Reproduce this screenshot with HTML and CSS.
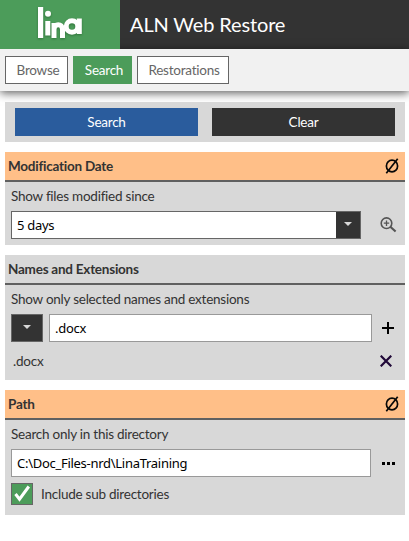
FILE: index.html
```html
<!DOCTYPE html>
<html lang="en">
<head>
<meta charset="utf-8">
<title>ALN Web Restore</title>
<link rel="stylesheet" href="styles.css">
</head>
<body>
<header class="header">
  <div class="brand">
    <svg class="logo" width="48" height="36" viewBox="0 0 48 36" fill="none" stroke="#fff">
      <g class="logo-shade">
        <path d="M4.600 2v31" stroke-width="5.2"/>
        <path d="M11.800 16v14.500" stroke-width="5"/>
        <circle cx="12" cy="8.700" r="3" fill="#fff" stroke="none"/>
        <path d="M18 33V18M18 24.500c0-6.500 8.500-6.500 8.500 0v8.500" stroke-width="5"/>
        <circle cx="36" cy="21.500" r="5.800" stroke-width="5"/>
        <path d="M43.300 13.500v15.500" stroke-width="5"/>
      </g>
    </svg>
  </div>
  <h1 class="title">ALN Web Restore</h1>
</header>
<nav class="tabs">
  <button class="tab tab-browse">Browse</button>
  <button class="tab tab-search active">Search</button>
  <button class="tab tab-restorations">Restorations</button>
</nav>
<main class="content">
  <div class="actions">
    <button class="action primary">Search</button>
    <button class="action">Clear</button>
  </div>

  <section class="panel panel-date">
    <div class="panel-head filtered">
      <h2>Modification Date</h2>
      <svg class="empty" width="14" height="16" viewBox="0 0 14 16" fill="none" stroke="#080808" stroke-width="1.7"><ellipse cx="7" cy="8" rx="5.600" ry="5.800"/><path d="M1.300 15.300L12.700.7"/></svg>
    </div>
    <p class="label">Show files modified since</p>
    <div class="row">
      <div class="select"><span class="value">5 days</span><span class="arrow"><i class="caret"></i></span></div>
      <svg class="magnify" width="17" height="16" viewBox="0 0 17 16" fill="none" stroke="#555"><circle cx="6.500" cy="6.200" r="5.300" stroke-width="1.600"/><path d="M3.800 6.200h5.400M6.500 3.500v5.400" stroke-width="1.300"/><path d="M10.300 9.800l5.300 4.700" stroke-width="2.200"/></svg>
    </div>
  </section>

  <section class="panel panel-names">
    <div class="panel-head">
      <h2>Names and Extensions</h2>
    </div>
    <p class="label">Show only selected names and extensions</p>
    <div class="row">
      <span class="arrow boxed"><i class="caret"></i></span>
      <div class="field field-name"><span class="value">.docx</span></div>
      <svg class="plus" width="12" height="12" viewBox="0 0 12 12" stroke="#000" stroke-width="2"><path d="M0 6h12M6 0v12"/></svg>
    </div>
    <div class="entry">
      <span>.docx</span>
      <svg width="12" height="12" viewBox="0 0 12 12" stroke="#200838" stroke-width="2.200"><path d="M.7.7l10.600 10.600M11.300.7L.7 11.300"/></svg>
    </div>
  </section>

  <section class="panel panel-path">
    <div class="panel-head filtered">
      <h2>Path</h2>
      <svg class="empty" width="14" height="16" viewBox="0 0 14 16" fill="none" stroke="#080808" stroke-width="1.7"><ellipse cx="7" cy="8" rx="5.600" ry="5.800"/><path d="M1.300 15.300L12.700.7"/></svg>
    </div>
    <p class="label">Search only in this directory</p>
    <div class="row">
      <div class="field field-path"><span class="value">C:\Doc_Files-nrd\LinaTraining</span></div>
      <svg class="more" width="13" height="3" viewBox="0 0 13 3"><path d="M0 0h3v3H0zM5 0h3v3H5zM10 0h3v3h-3z"/></svg>
    </div>
    <div class="option">
      <span class="check"><svg width="18" height="18" viewBox="0 0 18 18" fill="none" stroke="#fff" stroke-width="3"><path d="M2.500 9l4 5.200L15.800 1.500"/></svg></span>
      <span class="option-text">Include sub directories</span>
    </div>
  </section>
</main>
</body>
</html>
```
FILE: styles.css
```css
* { box-sizing: border-box; }
body {
  margin: 0;
  background: #fff;
  color: #333;
  font: 13.5px/18px Lato, "Open Sans", sans-serif;
  letter-spacing: -.24px;
}
h1, h2, p { margin: 0; }
button { font: inherit; letter-spacing: inherit; padding: 0; border-radius: 0; }
svg { display: block; flex: none; }

.header { display: flex; height: 49px; background: #333; }
.brand { width: 120px; background: #4c9c5a; padding: 5px 0 0 36px; }
.logo-shade { filter: drop-shadow(0 1px 1px rgba(0, 40, 0, .35)); }
.title {
  padding-left: 10px;
  color: #fff;
  font-size: 20px;
  font-weight: 400;
  line-height: 48px;
  letter-spacing: -.14px;
}

.tabs {
  display: flex;
  gap: 5px;
  height: 42px;
  padding: 7px 5px;
  background: #f1f1f1;
  box-shadow: 0 2px 9px rgba(0, 0, 0, .65);
}
.tab { height: 28px; border: 1px solid #666; background: #fff; color: #666; padding-left: 3px; }
.tab-browse { width: 63px; }
.tab-search { width: 59px; }
.tab-restorations { width: 92px; padding-left: 2px; }
.tab.active { background: #4c9c5a; border-color: #4c9c5a; color: #fff; }

.content { display: flex; flex-direction: column; gap: 10px; width: 405px; padding: 11px 0 0 5px; }
.actions { display: flex; gap: 14px; height: 40px; padding: 6px 10px; background: #d8d8d8; }
.action { flex: 1; height: 28px; border: 0; background: #333; color: #fff; }
.action.primary { background: #2a5c9d; }

.panel { background: #d8d8d8; }
.panel-date { height: 93px; }
.panel-names, .panel-path { height: 125px; }
.panel-head {
  display: flex;
  justify-content: space-between;
  align-items: center;
  height: 30px;
  padding: 0 6px 0 3px;
  border-bottom: 2px solid #606060;
}
.panel-head.filtered { background: #ffbf88; }
.panel-head h2 { font-size: 13.5px; line-height: 28px; font-weight: 700; }
.label { height: 29px; padding: 5px 0 0 6px; white-space: nowrap; }
.row { display: flex; align-items: center; height: 28px; padding-left: 6px; }
.select, .field {
  display: flex;
  align-items: center;
  height: 28px;
  border: 1px solid #999;
  background: #fff;
}
.select { width: 350px; border-color: #666; }
.field-name { width: 323px; margin-left: 6px; }
.field-path { width: 360px; }
.value {
  flex: 1;
  padding-left: 5px;
  color: #000;
  font-family: "Noto Sans", sans-serif;
  font-size: 13px;
  letter-spacing: -.28px;
}
.arrow { display: flex; width: 24px; height: 26px; background: #333; }
.arrow.boxed { width: 32px; height: 28px; border: 1px solid #666; }
.caret {
  width: 8px;
  height: 4px;
  margin: 10px auto 0;
  background: #d8d8d8;
  clip-path: polygon(0 0, 100% 0, 50% 100%);
}
.magnify { margin: 0 0 0 19px; }
.plus { margin-left: 10px; }
.more { margin-left: 11px; }
.entry {
  display: flex;
  justify-content: space-between;
  align-items: center;
  height: 38px;
  padding: 0 13px 0 8px;
}
.option { display: flex; align-items: center; gap: 8px; height: 22px; margin: 6px 0 0 6px; }
.check { display: flex; width: 22px; height: 22px; padding: 1px; border: 1px solid #666; background: #4c9c5a; }
```
